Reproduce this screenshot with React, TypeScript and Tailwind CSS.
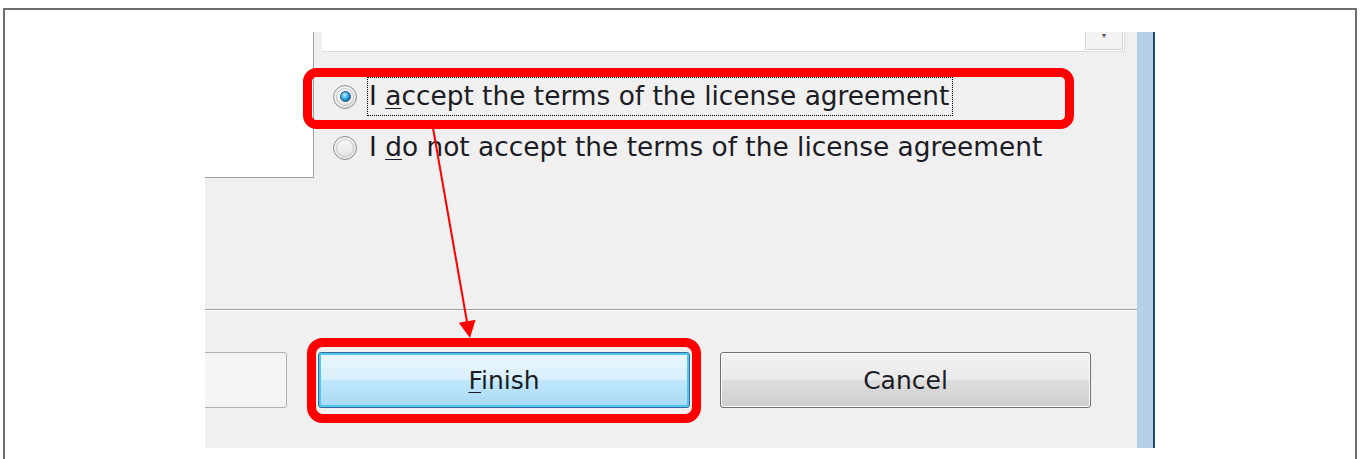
import React from "react";

const uiFont = { fontFamily: '"DejaVu Sans", Tahoma, sans-serif' };

function Radio({ checked }: { checked?: boolean }) {
  return (
    <div className="flex h-[24px] w-[24px] shrink-0 items-center justify-center rounded-full border border-[#8f9192] bg-[radial-gradient(circle_at_40%_35%,#ffffff,#e4e4e4_70%,#cfcfcf)]">
      <div className="flex h-[18px] w-[18px] items-center justify-center rounded-full border border-[#c6c8ca] bg-[linear-gradient(#f8f8f8,#e6e6e6)]">
        {checked && (
          <div className="h-[11px] w-[11px] rounded-full border border-[#1e4f7c] bg-[radial-gradient(circle_at_40%_35%,#bff0ff,#35a8e6_45%,#125a98_90%)]" />
        )}
      </div>
    </div>
  );
}

function Label({ text, hotkey, focused }: { text: string; hotkey: number; focused?: boolean }) {
  return (
    <span
      className={
        "flex h-[39px] items-center whitespace-pre px-[1px] pr-[3px] text-[26.4px] leading-none text-[#1c1c24] " +
        (focused ? "border border-dotted border-black" : "border border-transparent")
      }
    >
      <span>
        {text.slice(0, hotkey)}
        <span className="underline decoration-1 underline-offset-[3px]">{text[hotkey]}</span>
        {text.slice(hotkey + 1)}
      </span>
    </span>
  );
}

export default function App() {
  return (
    <div className="relative h-[459px] w-[1360px] overflow-hidden bg-white px-[3px] pt-[8px]" style={uiFont}>
      {/* outer frame of the figure */}
      <div className="h-full border-x-2 border-t-2 border-[#6e6e6e] pl-[200px] pt-[22px]">
        {/* dialog crop */}
        <div className="flex h-[416px] w-[950px]">
          <div className="flex w-[932px] flex-col bg-[#f0f0f0]">
            {/* license area */}
            <div className="flex h-[277px]">
              <div className="h-[146px] w-[109px] shrink-0 border-b border-r border-[#a0a0a0] bg-white" />
              <div className="flex flex-1 flex-col">
                <div className="ml-[8px] flex h-[20px] w-[803px] justify-end border-b border-r border-[#dcdcdc] bg-white">
                  <div className="mr-[1px] flex h-[18px] w-[38px] justify-center border border-t-0 border-[#d5d5d5] bg-[#f3f3f3] text-[8px] leading-none text-[#555]">
                    ▾
                  </div>
                </div>
                <div className="ml-[19px] mt-[25px] flex flex-col gap-[12px]">
                  <div className="flex items-center gap-[10px]">
                    <Radio checked />
                    <Label text="I accept the terms of the license agreement" hotkey={2} focused />
                  </div>
                  <div className="flex items-center gap-[10px]">
                    <Radio />
                    <Label text="I do not accept the terms of the license agreement" hotkey={2} />
                  </div>
                </div>
              </div>
            </div>
            <div className="h-px bg-[#a0a0a0]" />
            <div className="h-px bg-white" />
            {/* button row */}
            <div className="flex flex-1 items-start justify-end overflow-hidden pr-[46px] pt-[41px]">
              <button className="h-[56px] w-[372px] shrink-0 rounded-[3px] border border-[#adb2b5] bg-[#f4f4f4]" />
              <button className="ml-[31px] flex h-[56px] w-[372px] shrink-0 items-center justify-center rounded-[3px] border border-[#2f6c9c] bg-[linear-gradient(#eaf6fd_0%,#d9f0fc_48%,#bee6fd_52%,#a9d9f3_100%)] text-[25px] leading-none text-[#1c1c24] shadow-[inset_0_0_0_2px_#55c6f2]">
                <span>
                  <span className="underline decoration-1 underline-offset-[3px]">F</span>inish
                </span>
              </button>
              <button className="ml-[30px] flex h-[56px] w-[371px] shrink-0 items-center justify-center rounded-[3px] border border-[#707070] bg-[linear-gradient(#f2f2f2_0%,#ebebeb_48%,#dddddd_52%,#cfcfcf_100%)] text-[25px] leading-none text-[#1c1c24] shadow-[inset_0_0_0_1px_#fcfcfc]">
                Cancel
              </button>
            </div>
          </div>
          <div className="w-[16px] bg-[#b7d0e9]" />
          <div className="w-[2px] bg-[#1d4a6e]" />
        </div>
      </div>

      {/* red annotations */}
      <svg className="pointer-events-none absolute inset-0" width="1360" height="459" viewBox="0 0 1360 459">
        <rect x="307.5" y="72.5" width="762" height="52" rx="9" fill="none" stroke="#ff0000" strokeWidth="9" />
        <rect x="311.5" y="342.5" width="385" height="76" rx="11" fill="none" stroke="#ff0000" strokeWidth="9" />
        <line x1="433" y1="128" x2="467" y2="322" stroke="#ff0000" strokeWidth="2" />
        <polygon points="475.6,319.7 458.8,322.7 470,338" fill="#ff0000" />
      </svg>
    </div>
  );
}
